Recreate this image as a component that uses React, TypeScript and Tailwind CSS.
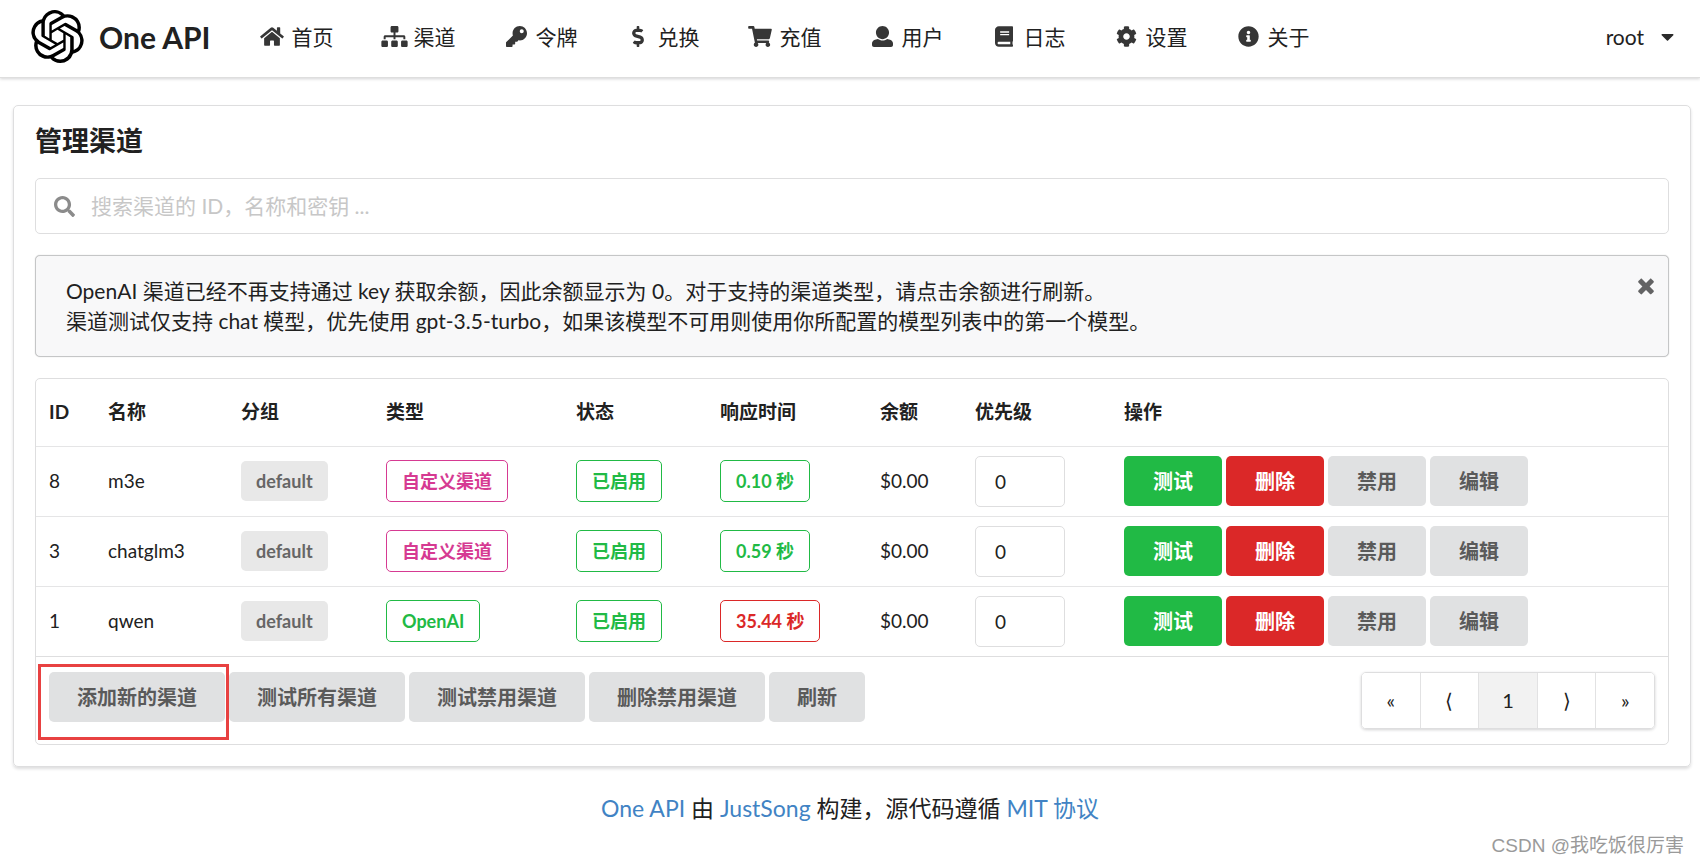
import { useState } from "react";
import {
    FaBook,
    FaCaretDown,
    FaCog,
    FaDollarSign,
    FaHome,
    FaInfoCircle,
    FaKey,
    FaSearch,
    FaShoppingCart,
    FaSitemap,
} from "react-icons/fa";
import { SiOpenai } from "react-icons/si";

function UserIcon({ className }: { className?: string }) {
    return (
        <svg viewBox="0 0 512 512" fill="currentColor" className={className} aria-hidden="true">
            <path d="M256 0c88.366 0 160 71.634 160 160s-71.634 160-160 160S96 248.366 96 160 167.634 0 256 0zm183.283 333.821l-71.313-17.828c-74.923 53.89-165.738 41.864-223.94 0l-71.313 17.828C29.981 344.505 0 382.903 0 426.955V464c0 26.51 21.49 48 48 48h416c26.51 0 48-21.49 48-48v-37.045c0-44.052-29.981-82.45-72.717-93.134z" />
        </svg>
    );
}

function CloseIcon({ className }: { className?: string }) {
    return (
        <svg viewBox="0 0 384 512" fill="currentColor" className={className} aria-hidden="true">
            <path d="M323.1 441l53.9-53.9c9.4-9.4 9.4-24.5 0-33.9L279.8 256l97.2-97.2c9.4-9.4 9.4-24.5 0-33.9L323.1 71c-9.4-9.4-24.5-9.4-33.9 0L192 168.2 94.8 71c-9.4-9.4-24.5-9.4-33.9 0L7 124.9c-9.4 9.4-9.4 24.5 0 33.9l97.2 97.2L7 353.2c-9.4 9.4-9.4 24.5 0 33.9L60.9 441c9.4 9.4 24.5 9.4 33.9 0l97.2-97.2 97.2 97.2c9.3 9.3 24.5 9.3 33.9 0z" />
        </svg>
    );
}

const navLinks = [
    { href: "#home", label: "首页", icon: FaHome, size: "w-6" },
    { href: "#channel", label: "渠道", icon: FaSitemap, size: "w-[27px]" },
    { href: "#token", label: "令牌", icon: FaKey, size: "w-[21px]" },
    { href: "#redemption", label: "兑换", icon: FaDollarSign, size: "w-3" },
    { href: "#topup", label: "充值", icon: FaShoppingCart, size: "w-6" },
    { href: "#user", label: "用户", icon: UserIcon, size: "w-[21px]" },
    { href: "#log", label: "日志", icon: FaBook, size: "w-[18px]" },
    { href: "#setting", label: "设置", icon: FaCog, size: "w-[21px]" },
    { href: "#about", label: "关于", icon: FaInfoCircle, size: "w-[21px]" },
];

const columns = [
    { label: "ID", width: "w-[59px]" },
    { label: "名称", width: "w-[133px]" },
    { label: "分组", width: "w-[145px]" },
    { label: "类型", width: "w-[190px]" },
    { label: "状态", width: "w-[144px]" },
    { label: "响应时间", width: "w-[160px]" },
    { label: "余额", width: "w-[95px]" },
    { label: "优先级", width: "w-[149px]" },
    { label: "操作", width: "" },
];

const colors = {
    pink: "border-[#d63a92] text-[#d63a92]",
    green: "border-[#21ba45] text-[#21ba45]",
    red: "border-[#db2828] text-[#db2828]",
};

type Color = keyof typeof colors;

type Channel = {
    id: number;
    name: string;
    type: string;
    typeColor: Color;
    time: string;
    timeColor: Color;
    balance: string;
};

const channels: Channel[] = [
    { id: 8, name: "m3e", type: "自定义渠道", typeColor: "pink", time: "0.10 秒", timeColor: "green", balance: "$0.00" },
    { id: 3, name: "chatglm3", type: "自定义渠道", typeColor: "pink", time: "0.59 秒", timeColor: "green", balance: "$0.00" },
    { id: 1, name: "qwen", type: "OpenAI", typeColor: "green", time: "35.44 秒", timeColor: "red", balance: "$0.00" },
];

const actions = [
    { label: "测试", style: "bg-[#21ba45] text-white" },
    { label: "删除", style: "bg-[#db2828] text-white" },
    { label: "禁用", style: "bg-[#e0e1e2] text-[#5a5a5a]" },
    { label: "编辑", style: "bg-[#e0e1e2] text-[#5a5a5a]" },
];

const bulkActions = ["测试所有渠道", "测试禁用渠道", "删除禁用渠道", "刷新"];

const pages = ["«", "⟨", "1", "⟩", "»"];

function BasicLabel({ color, children }: { color: Color; children: string }) {
    return (
        <span
            className={`inline-block rounded-[5px] border bg-white px-[15px] py-2 text-lg leading-6 font-bold whitespace-nowrap ${colors[color]}`}
        >
            {children}
        </span>
    );
}

function Navbar() {
    return (
        <header className="flex h-[78px] items-center border-b border-[#dedede] bg-white pr-[26px] pl-[31px] shadow-[0_1px_3px_rgba(34,36,38,0.2)]">
            <a href="#home" className="flex items-center gap-[15px] pb-1">
                <SiOpenai className="size-[53px] text-black" />
                <span className="text-[30px] leading-10 font-bold">One API</span>
            </a>
            <nav className="ml-[25px] flex pb-1">
                {navLinks.map(({ href, label, icon: Icon, size }) => (
                    <a key={href} href={href} className="flex items-center gap-[7px] px-6 text-[21px] leading-8">
                        <span className="flex w-[25px] shrink-0 justify-center text-[#363636]">
                            <Icon className={`h-[21px] shrink-0 ${size}`} />
                        </span>
                        {label}
                    </a>
                ))}
            </nav>
            <button className="ml-auto flex items-center gap-[17px] pb-1 text-[21px] leading-8">
                root
                <FaCaretDown className="h-[21px] w-[13px] text-[#2b2b2b]" />
            </button>
        </header>
    );
}

function ChannelRow({ channel }: { channel: Channel }) {
    const [priority, setPriority] = useState("0");

    return (
        <tr className="h-[70px] border-t border-[#e5e5e6]">
            <td className="px-[13px]">{channel.id}</td>
            <td className="px-[13px]">{channel.name}</td>
            <td className="px-[13px]">
                <span className="inline-block rounded-[5px] bg-[#e8e8e8] px-[15px] py-2 text-lg leading-6 font-bold text-[#666]">
                    default
                </span>
            </td>
            <td className="px-[13px]">
                <BasicLabel color={channel.typeColor}>{channel.type}</BasicLabel>
            </td>
            <td className="px-[13px]">
                <BasicLabel color="green">已启用</BasicLabel>
            </td>
            <td className="px-[13px]">
                <BasicLabel color={channel.timeColor}>{channel.time}</BasicLabel>
            </td>
            <td className="px-[13px]">{channel.balance}</td>
            <td className="px-[13px]">
                <input
                    aria-label={`${channel.name} 优先级`}
                    value={priority}
                    onChange={(e) => setPriority(e.target.value)}
                    className="block h-[51px] w-[90px] rounded-[5px] border border-[#dededf] px-[19px] outline-none"
                />
            </td>
            <td className="px-[13px]">
                <div className="flex gap-1">
                    {actions.map((action) => (
                        <button
                            key={action.label}
                            className={`h-[50px] rounded-[5px] px-[29px] text-xl font-bold whitespace-nowrap ${action.style}`}
                        >
                            {action.label}
                        </button>
                    ))}
                </div>
            </td>
        </tr>
    );
}

function GreyButton({ children }: { children: string }) {
    return (
        <button className="h-[50px] rounded-[5px] bg-[#e0e1e2] px-7 text-xl font-bold whitespace-nowrap text-[#5a5a5a]">
            {children}
        </button>
    );
}

function ChannelsTable() {
    return (
        <div className="mt-[21px] rounded-[5px] border border-[#dededf]">
            <table className="w-full table-fixed border-collapse text-left text-[19px] leading-7">
                <thead>
                    <tr className="h-[67px]">
                        {columns.map((column) => (
                            <th key={column.label} className={`px-[13px] font-bold ${column.width}`}>
                                {column.label}
                            </th>
                        ))}
                    </tr>
                </thead>
                <tbody>
                    {channels.map((channel) => (
                        <ChannelRow key={channel.id} channel={channel} />
                    ))}
                </tbody>
                <tfoot>
                    <tr className="border-t border-[#dededf]">
                        <td colSpan={columns.length} className="px-[13px] py-[15px]">
                            <div className="flex items-start justify-between">
                                <div className="flex gap-1">
                                    <div className="relative">
                                        <GreyButton>添加新的渠道</GreyButton>
                                        <div className="pointer-events-none absolute -top-2 -right-1 -bottom-[18px] -left-[11px] border-3 border-[#e84141]" />
                                    </div>
                                    {bulkActions.map((label) => (
                                        <GreyButton key={label}>{label}</GreyButton>
                                    ))}
                                </div>
                                <nav
                                    aria-label="分页"
                                    className="flex h-[57px] w-[294px] divide-x divide-[#e2e2e3] overflow-hidden rounded-[5px] border border-[#dededf] shadow-[0_1px_3px_rgba(34,36,38,0.2)]"
                                >
                                    {pages.map((page) => (
                                        <button
                                            key={page}
                                            className={`flex-1 text-center text-xl ${page === "1" ? "bg-[#f2f2f2]" : "bg-white"}`}
                                        >
                                            {page}
                                        </button>
                                    ))}
                                </nav>
                            </div>
                        </td>
                    </tr>
                </tfoot>
            </table>
        </div>
    );
}

export default function App() {
    const [showPrompt, setShowPrompt] = useState(true);
    const [keyword, setKeyword] = useState("");

    return (
        <div className="relative min-h-screen bg-white font-['Lato','Noto_Sans_CJK_SC',sans-serif] text-[#212121]">
            <Navbar />

            <main className="mt-[27px] mr-[9px] ml-[13px] rounded-[5px] border border-[#dededf] px-[21px] pt-[17px] pb-[21px] shadow-[0_2px_3px_rgba(34,36,38,0.15)]">
                <h1 className="text-[27px] leading-9 font-bold">管理渠道</h1>

                <label className="mt-[19px] flex h-14 items-center gap-4 rounded-[5px] border border-[#dededf] px-[18px]">
                    <FaSearch className="size-[21px] shrink-0 text-[#8b8b8b]" />
                    <input
                        type="text"
                        aria-label="搜索渠道"
                        placeholder="搜索渠道的 ID，名称和密钥 ..."
                        value={keyword}
                        onChange={(e) => setKeyword(e.target.value)}
                        className="w-full text-[21px] leading-8 outline-none placeholder:text-[#c7c7c7]"
                    />
                </label>

                {showPrompt && (
                    <div className="mt-[21px] flex items-start justify-between rounded-[5px] border border-[#c5c6c7] bg-[#f8f8f9] py-5 pr-[14px] pl-[30px] shadow-[0_0_1px_rgba(34,36,38,0.3)]">
                        <p className="text-[21px] leading-[30px]">
                            OpenAI 渠道已经不再支持通过 key 获取余额，因此余额显示为 0。对于支持的渠道类型，请点击余额进行刷新。
                            <br />
                            渠道测试仅支持 chat 模型，优先使用 gpt-3.5-turbo，如果该模型不可用则使用你所配置的模型列表中的第一个模型。
                        </p>
                        <button aria-label="关闭" onClick={() => setShowPrompt(false)}>
                            <CloseIcon className="h-[21px] w-4 text-[#636364]" />
                        </button>
                    </div>
                )}

                <ChannelsTable />
            </main>

            <footer className="mt-[25px] text-center text-[23px] leading-8">
                <a href="#one-api" className="text-[#4183c4]">
                    One API
                </a>{" "}
                由{" "}
                <a href="#justsong" className="text-[#4183c4]">
                    JustSong
                </a>{" "}
                构建，源代码遵循{" "}
                <a href="#license" className="text-[#4183c4]">
                    MIT 协议
                </a>
            </footer>

            <div className="absolute right-4 bottom-1 font-['Liberation_Sans','Noto_Sans_CJK_SC',sans-serif] text-[19px] leading-7 text-[#9a9a9a]">
                CSDN @我吃饭很厉害
            </div>
        </div>
    );
}
